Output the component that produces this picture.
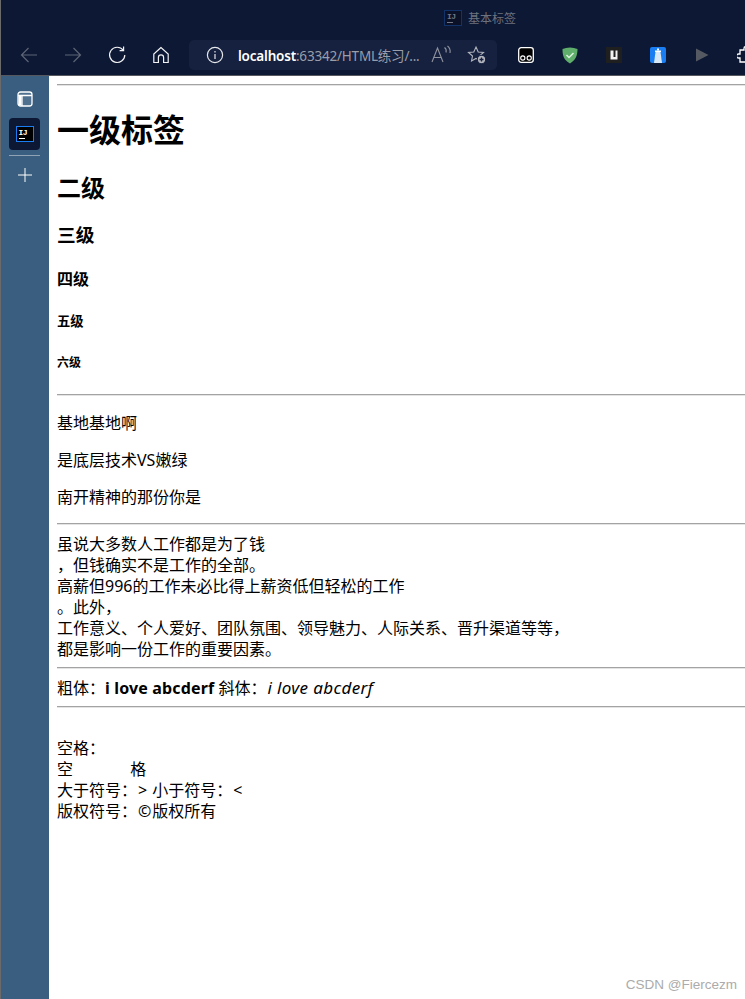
<div class="window">
  <header class="chrome">
    <div class="titlebar">
      <span class="ij small"><span class="ij-t">IJ</span><span class="ij-u"></span></span>
      <span class="title">基本标签</span>
    </div>
    <div class="toolbar">
      <button class="tb dim" aria-label="back"><svg width="20" height="20" viewBox="0 0 20 20"><path d="M18 10H2.500M9.500 3l-7 7 7 7" /></svg></button>
      <button class="tb dim" aria-label="forward"><svg width="20" height="20" viewBox="0 0 20 20"><path d="M2 10h15.500M10.500 3l7 7-7 7" /></svg></button>
      <button class="tb" aria-label="reload"><svg width="20" height="20" viewBox="0 0 20 20"><path d="M16.200 5.200A7.600 7.600 0 1 0 17.800 10M16.600 1.600v4h-4" /></svg></button>
      <button class="tb" aria-label="home"><svg width="20" height="20" viewBox="0 0 20 20"><path d="M10 2.500 2.800 9v8.500h4.600v-5a2.600 2.600 0 0 1 5.200 0v5h4.600V9z" /></svg></button>
      <div class="address">
        <svg class="info" width="18" height="18" viewBox="0 0 18 18"><circle cx="9" cy="9" r="7.600" /><path d="M9 8v5M9 5v1.400" /></svg>
        <span class="url"><b>localhost</b>:63342/HTML练习/...</span>
        <svg class="read" width="24" height="20" viewBox="0 0 24 20"><path d="M1 17 6.500 3 12 17M3 12.500h7M13.500 2.500c1.500 1 2 3 1.500 5M16.500 1c2 1.500 3 4 2.500 7" /></svg>
        <svg class="fav" width="20" height="20" viewBox="0 0 20 20"><path d="M9 2l2.200 5 5.300.5-4 3.500 1 5-4.500-2.500L4.500 16l1-5-4-3.500 5.300-.5z" /><circle class="fav-dot" cx="14.500" cy="14.500" r="4.200" /><path class="fav-plus" d="M14.500 12.500v4M12.500 14.500h4" /></svg>
      </div>
      <div class="exts">
        <span class="ext"><svg width="16" height="16" viewBox="0 0 16 16"><rect x="0.700" y="0.700" width="14.600" height="14.600" rx="2.500" fill="#000" stroke="#fff" stroke-width="1.300"/><circle cx="4.800" cy="11" r="2.100" fill="none" stroke="#fff" stroke-width="1.100"/><circle cx="11.200" cy="11" r="2.100" fill="none" stroke="#fff" stroke-width="1.100"/></svg></span>
        <span class="ext"><svg width="16" height="17" viewBox="0 0 16 17"><path d="M8 .5C5 .5 3 1.500 .5 2c0 6 1 11 7.500 14.500C14 13 15.500 8 15.500 2 13 1.500 11 .5 8 .5z" fill="#5fae6b"/><path d="M4.500 8l2.500 2.500L11.500 6" fill="none" stroke="#dff2e2" stroke-width="1.500"/></svg></span>
        <span class="ext"><svg width="16" height="16" viewBox="0 0 16 16"><rect width="16" height="16" fill="#1f1f1f"/><path d="M4.500 3.500h3v6.500h2V3.500h2v9h-7z" fill="#f2f2f2"/></svg></span>
        <span class="ext"><svg width="16" height="16" viewBox="0 0 16 16"><rect width="16" height="16" rx="2" fill="#1a7ef2"/><path d="M5.500 5h5L12 16H4z" fill="#d9e8f7"/><rect x="5" y="3.500" width="6" height="1.500" fill="#fff"/><rect x="7" y="1.500" width="2" height="2" fill="#fff"/></svg></span>
        <span class="ext"><svg width="14" height="14" viewBox="0 0 14 14"><path d="M1 0.500 13.500 7 1 13.500z" fill="#555a62"/></svg></span>
        <span class="ext"><svg width="18" height="18" viewBox="0 0 18 18"><path d="M7 2.500a2 2 0 0 1 4 0V4h4v4h-1.500a2 2 0 0 0 0 4H15v4H3v-4H1.500a2 2 0 0 1 0-4H3V4h4z" fill="none" stroke="#fff" stroke-width="1.300"/></svg></span>
      </div>
    </div>
  </header>

  <div class="body">
    <aside class="side">
      <svg class="tabs" width="16" height="16" viewBox="0 0 16 16"><rect x="1" y="1" width="14" height="14" rx="2.500" fill="#4f718f" stroke="#fff" stroke-width="1.300"/><path d="M1 4.500h14M5 4.500V15" fill="none" stroke="#fff" stroke-width="1.300"/><rect x="1.500" y="5" width="3" height="9.500" fill="#fff"/></svg>
      <div class="tile"><span class="ij"><span class="ij-t">IJ</span><span class="ij-u"></span></span></div>
      <div class="rule"></div>
      <svg class="plus" width="16" height="16" viewBox="0 0 16 16"><path d="M8 1v14M1 8h14" stroke="#fff" stroke-width="1" fill="none"/></svg>
    </aside>

    <main class="page">
      <hr />
      <h1>一级标签</h1>
      <h2>二级</h2>
      <h3>三级</h3>
      <h4>四级</h4>
      <h5>五级</h5>
      <h6>六级</h6>
      <hr />
      <p>基地基地啊</p>
      <p>是底层技术VS嫩绿</p>
      <p>南开精神的那份你是</p>
      <hr />
      虽说大多数人工作都是为了钱<br />
      ，但钱确实不是工作的全部。<br />
      高薪但996的工作未必比得上薪资低但轻松的工作<br />
      。此外，<br />
      工作意义、个人爱好、团队氛围、领导魅力、人际关系、晋升渠道等等，<br />
      都是影响一份工作的重要因素。
      <hr />
      粗体：<strong>i love abcderf</strong> 斜体：<em>i love abcderf</em>
      <hr />
      <br />
      空格：<br />
      空<span class="gap">&nbsp;&nbsp;&nbsp;&nbsp;&nbsp;&nbsp;&nbsp;&nbsp;&nbsp;&nbsp;&nbsp;&nbsp;&nbsp;&nbsp;</span>格<br />
      大于符号：<span class="sym">&gt;</span> 小于符号：<span class="sym">&lt;</span><br />
      版权符号：<span class="sym">©</span>版权所有
    </main>
  </div>

  <div class="mark">CSDN @Fiercezm</div>
</div>

<style>
  :global(body) { margin: 0; background: #fff; }
  .window {
    position: relative; width: 745px; height: 999px; overflow: hidden;
    display: flex; flex-direction: column;
    font-family: "Noto Sans", "Noto Sans CJK SC", sans-serif;
    border-left: 1px solid #6a6a6a; box-sizing: border-box;
  }
  .chrome { background: #0d1834; height: 76px; flex: none; border-bottom: 1px solid #55585f; box-sizing: border-box; }
  .titlebar { height: 34px; display: flex; align-items: center; padding-left: 443px; padding-top: 1px; box-sizing: border-box; }
  .title { margin-left: 6px; font: 12px "Noto Sans CJK SC", sans-serif; color: #6d727f; }
  .ij {
    width: 14px; height: 14px; border: 1px solid #1a7ef2; background: #000; display: flex; flex-direction: column;
    align-items: flex-start; padding: 0 0 0 2px; box-sizing: content-box;
  }
  .ij.small { border-color: #123a78; background: #0b1024; opacity: 0.8; }
  .ij-t { font: bold 8px/9px "Liberation Mono", monospace; color: #fff; letter-spacing: -0.500px; margin-top: 1px; }
  .ij-u { width: 6px; height: 1px; background: #fff; margin-top: 1px; }
  .small .ij-t { color: #8a8f99; }
  .small .ij-u { background: #8a8f99; }

  .toolbar { height: 41px; display: flex; align-items: center; padding-left: 6px; padding-top: 1px; box-sizing: border-box; }
  .tb { width: 44px; height: 30px; padding: 0; border: 0; background: none; display: flex; align-items: center; justify-content: center; flex: none; }
  .tb svg { fill: none; stroke: #f1f2f4; stroke-width: 1.200; }
  .tb.dim svg { stroke: #5d6475; }
  .address {
    margin-left: 6px; width: 308px; height: 30px; border-radius: 5px; background: #15213f;
    display: flex; align-items: center; flex: none; padding-left: 17px; box-sizing: border-box;
  }
  .info { fill: none; stroke: #e6e7ea; stroke-width: 1.200; flex: none; }
  .url { margin-left: 14px; width: 190px; font: 13.500px "Noto Sans", "Noto Sans CJK SC", sans-serif; color: #9a9eaa; white-space: nowrap; overflow: hidden; flex: none; letter-spacing: -0.200px; }
  .url b { font-weight: 600; color: #fff; }
  .read { fill: none; stroke: #8f939e; stroke-width: 1.100; flex: none; margin-left: 3px; }
  .fav { fill: none; stroke: #b2b5bd; stroke-width: 1.100; flex: none; margin-left: 12px; }
  .fav-dot { fill: #b2b5bd; stroke: #15213f; }
  .fav-plus { stroke: #15213f; stroke-width: 1.300; }
  .exts { display: flex; margin-left: 7px; }
  .ext { width: 44px; height: 30px; display: flex; align-items: center; justify-content: center; flex: none; }

  .body { flex: 1; display: flex; min-height: 0; }
  .side { width: 48px; flex: none; background: #3a5e7f; display: flex; flex-direction: column; align-items: center; box-sizing: border-box; padding: 15px 1px 0 0; }
  .tabs { flex: none; }
  .tile { margin-top: 11px; width: 31px; height: 32px; background: #0d1834; border-radius: 4px; display: flex; align-items: center; justify-content: center; }
  .rule { margin-top: 5px; width: 31px; height: 1px; background: #8fa3b5; }
  .plus { margin-top: 11px; }

  .page {
    flex: 1; min-width: 0; padding: 8px; background: #fff; color: #000; font-size: 16px; line-height: 21px;
    white-space: nowrap; overflow: hidden; display: block;
  }
  hr { margin: 7px -100px 9px 0; border: 0; border-top: 1px solid #a3a3a3; border-bottom: 1px solid #e4e4e4; }
  .page > hr:first-child { margin-top: 0; }
  h1, h2, h3, h4, h5, h6 { font-weight: 700; }
  h1 { font-size: 32px; line-height: 43px; margin: 22.440px 0 19.920px; }
  h2 { font-size: 24px; line-height: 30px; margin: 21.920px 0 19.920px; }
  h3 { font-size: 18.720px; line-height: 23px; margin: 18.720px 0; }
  h4 { font-size: 16px; line-height: 21px; margin: 22.280px 0 21.280px; }
  h5 { font-size: 13.280px; line-height: 18px; margin: 22.180px 0; }
  h6 { font-size: 12px; line-height: 16px; margin: 24.970px 0 23px; }
  p { margin: 16px 0; }
  hr + p { margin-top: 17px; }
  p:last-of-type { margin-bottom: 15px; }
  strong { font-weight: 700; letter-spacing: 0.150px; }
  em { font-style: italic; font-size: 17px; line-height: 16px; letter-spacing: 0.350px; margin-left: 1px; }
  .gap { letter-spacing: -0.070px; }
  .sym { padding: 0 1px; }
  .mark { position: absolute; right: 8px; bottom: 7px; font: 13.500px "Liberation Sans", sans-serif; color: #ababab; }
</style>
